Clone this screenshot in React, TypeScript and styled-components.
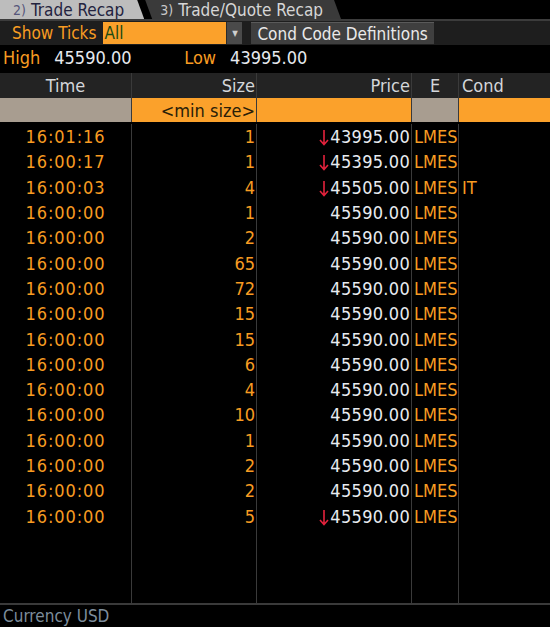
import React, { FC } from 'react';
import styled, { createGlobalStyle } from 'styled-components';

const GlobalStyle = createGlobalStyle`
  html, body {
    margin: 0;
    padding: 0;
    background: #000;
  }
  body {
    font-family: "DejaVu Sans Condensed", "DejaVu Sans", sans-serif;
    font-stretch: condensed;
  }
`;

const ORANGE = '#f89c22';
const AMBER_BG = '#fba12b';
const TAN = '#a89d90';
const LINE = '#3a3a3a';

const Screen = styled.div`
  width: 550px;
  height: 627px;
  display: flex;
  flex-direction: column;
  background: #000;
  overflow: hidden;
`;

const TabBar = styled.div`
  display: flex;
  height: 19px;
  border-bottom: 2px solid #3c3c3c;
  background: #000;
`;

const Tab = styled.div<{ $active?: boolean }>`
  display: flex;
  align-items: center;
  height: 19px;
  font-size: 17px;
  white-space: nowrap;
  background: ${(p) => (p.$active ? '#bdbdbd' : '#3a3a3a')};
  color: ${(p) => (p.$active ? '#23233f' : '#d6d6d6')};
  padding: ${(p) => (p.$active ? '0 20px 0 13px' : '0 18px 0 15px')};
  margin-left: ${(p) => (p.$active ? '0' : '1px')};
  clip-path: ${(p) =>
    p.$active
      ? 'polygon(0 0, calc(100% - 7px) 0, 100% 100%, 0 100%)'
      : 'polygon(0 0, calc(100% - 7px) 0, 100% 100%, 7px 100%, 0 0)'};
`;

const Hotkey = styled.span<{ $active?: boolean }>`
  font-size: 14px;
  margin-right: 5px;
  color: ${(p) => (p.$active ? '#55557a' : '#c8c8c8')};
`;

const Toolbar = styled.div`
  display: flex;
  align-items: center;
  height: 24px;
  background: #1e1e1e;
  font-size: 17px;
`;

const Label = styled.span`
  color: ${ORANGE};
  margin-left: 12px;
  margin-right: 7px;
`;

const Select = styled.div`
  display: flex;
  height: 22px;
`;

const SelectValue = styled.div`
  width: 122px;
  background: ${AMBER_BG};
  color: #1c4a12;
  padding-left: 1px;
  display: flex;
  align-items: center;
`;

const SelectArrow = styled.div`
  width: 15px;
  background: #4a4a4a;
  color: #cfcfcf;
  font-size: 8px;
  display: flex;
  align-items: center;
  justify-content: center;
  border-left: 1px solid #2a2a2a;
`;

const Button = styled.div`
  margin-left: 9px;
  height: 22px;
  padding: 0 6px;
  background: #3f3f3f;
  border-top: 1px solid #5a5a5a;
  box-sizing: border-box;
  color: #eaeaea;
  display: flex;
  align-items: center;
  white-space: nowrap;
`;

const Stats = styled.div`
  display: flex;
  align-items: center;
  height: 25px;
  font-size: 18px;
  padding-left: 3px;
`;

const StatLabel = styled.span<{ $gap: number }>`
  color: ${ORANGE};
  margin-right: ${(p) => p.$gap}px;
`;

const StatValue = styled.span<{ $width?: number }>`
  color: #e6e9ee;
  width: ${(p) => (p.$width ? `${p.$width}px` : 'auto')};
`;

const Table = styled.div`
  margin-top: 3px;
  flex: 1;
  display: flex;
  flex-direction: column;
  border-bottom: 2px solid ${LINE};
`;

const Row = styled.div<{ $height?: number; $grow?: boolean }>`
  display: grid;
  grid-template-columns: 132px 125px 155px 47px 1fr;
  height: ${(p) => (p.$height ? `${p.$height}px` : 'auto')};
  flex: ${(p) => (p.$grow ? 1 : 'none')};
`;

const HeaderRow = styled(Row)`
  background: #232323;
  font-size: 18px;
  color: #d4d6da;
`;

const Cell = styled.div<{ $align?: 'left' | 'right' | 'center'; $bg?: string; $last?: boolean }>`
  display: flex;
  align-items: center;
  justify-content: ${(p) =>
    p.$align === 'right' ? 'flex-end' : p.$align === 'center' ? 'center' : 'flex-start'};
  padding: ${(p) => (p.$align === 'right' ? '0 1px 0 0' : p.$align === 'left' ? '0 0 0 3px' : '0')};
  border-right: ${(p) => (p.$last ? 'none' : `1px solid ${LINE}`)};
  background: ${(p) => p.$bg || 'transparent'};
  white-space: nowrap;
  overflow: hidden;
`;

const FilterRow = styled(Row)`
  font-size: 18px;
  color: #2a2008;
  margin-bottom: 2px;
`;

const Body = styled.div`
  flex: 1;
  display: flex;
  flex-direction: column;
  font-size: 18px;
`;

const Time = styled.span`
  color: ${ORANGE};
  letter-spacing: 0.9px;
`;

const Size = styled.span`
  color: ${ORANGE};
`;

const Price = styled.span`
  color: #e8ebf0;
  letter-spacing: 0.3px;
  display: flex;
  align-items: center;
`;

const DownArrow = styled.svg`
  width: 10px;
  height: 17px;
  margin-right: 1px;
  margin-top: 2px;
`;

const Exch = styled.span`
  color: ${ORANGE};
  padding-left: 2px;
`;

const Cond = styled.span`
  color: ${ORANGE};
`;

const Footer = styled.div`
  height: 22px;
  display: flex;
  align-items: center;
  padding-left: 3px;
  font-size: 17px;
  color: #7d8d9c;
`;

type Trade = { time: string; size: number; price: string; down?: boolean; cond?: string };

const trades: Trade[] = [
  { time: '16:01:16', size: 1, price: '43995.00', down: true },
  { time: '16:00:17', size: 1, price: '45395.00', down: true },
  { time: '16:00:03', size: 4, price: '45505.00', down: true, cond: 'IT' },
  { time: '16:00:00', size: 1, price: '45590.00' },
  { time: '16:00:00', size: 2, price: '45590.00' },
  { time: '16:00:00', size: 65, price: '45590.00' },
  { time: '16:00:00', size: 72, price: '45590.00' },
  { time: '16:00:00', size: 15, price: '45590.00' },
  { time: '16:00:00', size: 15, price: '45590.00' },
  { time: '16:00:00', size: 6, price: '45590.00' },
  { time: '16:00:00', size: 4, price: '45590.00' },
  { time: '16:00:00', size: 10, price: '45590.00' },
  { time: '16:00:00', size: 1, price: '45590.00' },
  { time: '16:00:00', size: 2, price: '45590.00' },
  { time: '16:00:00', size: 2, price: '45590.00' },
  { time: '16:00:00', size: 5, price: '45590.00', down: true },
];

const Arrow: FC = () => (
  <DownArrow viewBox="0 0 10 17">
    <path d="M5 1 V15 M1 11 L5 15.5 L9 11" fill="none" stroke="#e3223c" strokeWidth="1.6" />
  </DownArrow>
);

const App: FC = () => (
  <Screen>
    <GlobalStyle />
    <TabBar>
      <Tab $active>
        <Hotkey $active>2)</Hotkey>Trade Recap
      </Tab>
      <Tab>
        <Hotkey>3)</Hotkey>Trade/Quote Recap
      </Tab>
    </TabBar>
    <Toolbar>
      <Label>Show Ticks</Label>
      <Select>
        <SelectValue>All</SelectValue>
        <SelectArrow>▼</SelectArrow>
      </Select>
      <Button>Cond Code Definitions</Button>
    </Toolbar>
    <Stats>
      <StatLabel $gap={14}>High</StatLabel>
      <StatValue $width={130}>45590.00</StatValue>
      <StatLabel $gap={14}>Low</StatLabel>
      <StatValue>43995.00</StatValue>
    </Stats>
    <Table>
      <HeaderRow $height={25}>
        <Cell $align="center">Time</Cell>
        <Cell $align="right">Size</Cell>
        <Cell $align="right">Price</Cell>
        <Cell $align="center">E</Cell>
        <Cell $align="left" $last>Cond</Cell>
      </HeaderRow>
      <FilterRow $height={24}>
        <Cell $bg={TAN} />
        <Cell $align="right" $bg={AMBER_BG}>&lt;min size&gt;</Cell>
        <Cell $bg={AMBER_BG} />
        <Cell $bg={TAN} />
        <Cell $bg={AMBER_BG} $last />
      </FilterRow>
      <Body>
        {trades.map((t, i) => (
          <Row key={i} $height={25.3}>
            <Cell $align="center">
              <Time>{t.time}</Time>
            </Cell>
            <Cell $align="right">
              <Size>{t.size}</Size>
            </Cell>
            <Cell $align="right">
              <Price>
                {t.down && <Arrow />}
                {t.price}
              </Price>
            </Cell>
            <Cell>
              <Exch>LMES</Exch>
            </Cell>
            <Cell $align="left" $last>
              {t.cond && <Cond>{t.cond}</Cond>}
            </Cell>
          </Row>
        ))}
        <Row $grow>
          <Cell />
          <Cell />
          <Cell />
          <Cell />
          <Cell $last />
        </Row>
      </Body>
    </Table>
    <Footer>Currency USD</Footer>
  </Screen>
);

export default App;
